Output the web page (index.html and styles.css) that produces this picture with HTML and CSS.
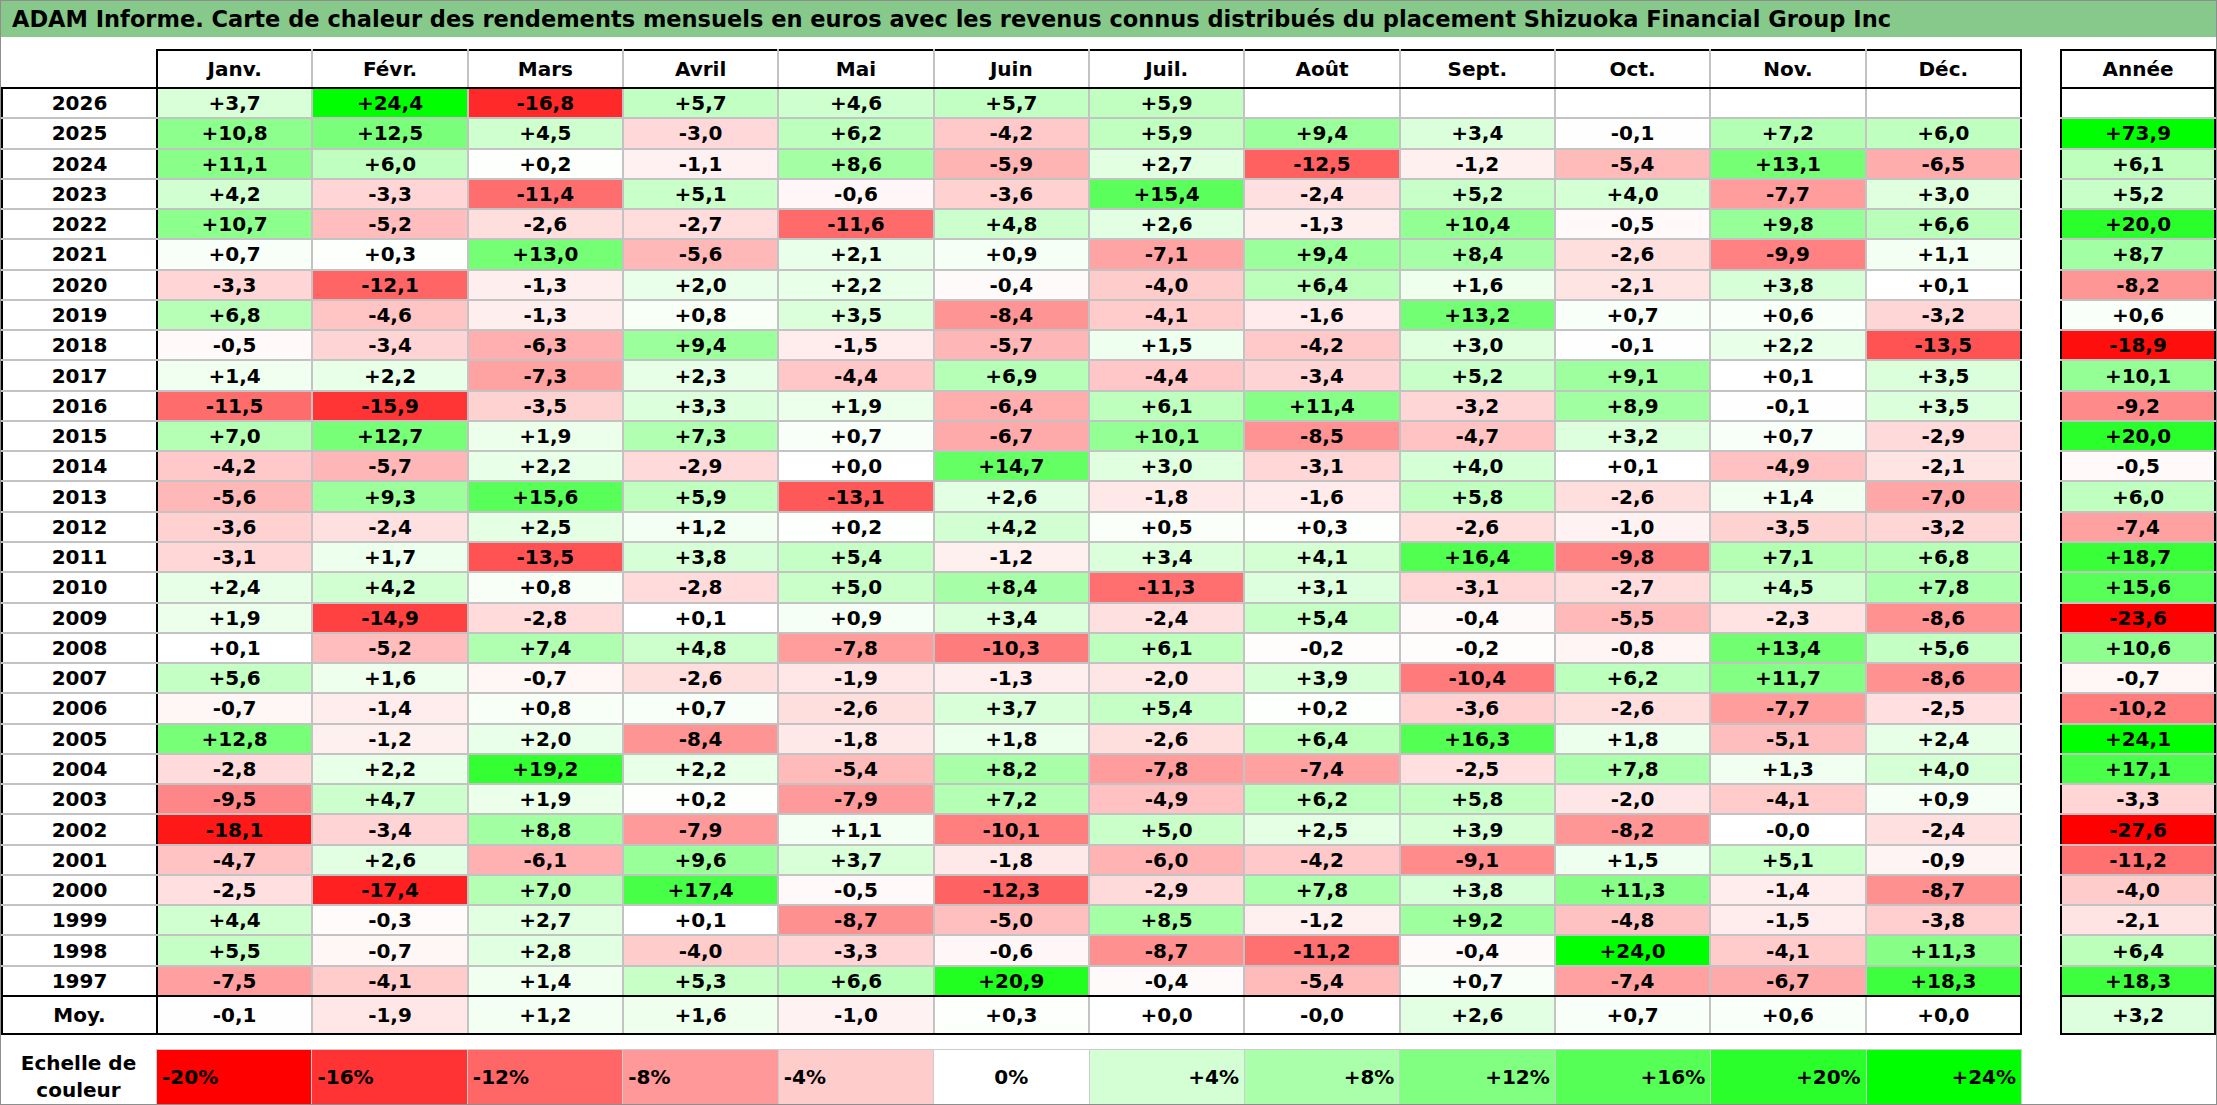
FILE: index.html
```html
<!DOCTYPE html>
<html lang="fr">
<head>
<meta charset="utf-8">
<title>ADAM Informe - Shizuoka Financial Group Inc</title>
<link rel="stylesheet" href="styles.css">
<script src="script.js" defer></script>
</head>
<body>
<div class="page">
  <div class="title">ADAM Informe. Carte de chaleur des rendements mensuels en euros avec les revenus connus distribués du placement Shizuoka Financial Group Inc</div>
  <div class="grid">
    <table class="hm main">
      <colgroup><col class="yc"><col span="12"></colgroup>
      <thead>
        <tr><th class="corner"></th><th>Janv.</th><th>Févr.</th><th>Mars</th><th>Avril</th><th>Mai</th><th>Juin</th><th>Juil.</th><th>Août</th><th>Sept.</th><th>Oct.</th><th>Nov.</th><th>Déc.</th></tr>
      </thead>
      <tbody>
        <tr><th>2026</th><td>+3,7</td><td>+24,4</td><td>-16,8</td><td>+5,7</td><td>+4,6</td><td>+5,7</td><td>+5,9</td><td></td><td></td><td></td><td></td><td></td></tr>
        <tr><th>2025</th><td>+10,8</td><td>+12,5</td><td>+4,5</td><td>-3,0</td><td>+6,2</td><td>-4,2</td><td>+5,9</td><td>+9,4</td><td>+3,4</td><td>-0,1</td><td>+7,2</td><td>+6,0</td></tr>
        <tr><th>2024</th><td>+11,1</td><td>+6,0</td><td>+0,2</td><td>-1,1</td><td>+8,6</td><td>-5,9</td><td>+2,7</td><td>-12,5</td><td>-1,2</td><td>-5,4</td><td>+13,1</td><td>-6,5</td></tr>
        <tr><th>2023</th><td>+4,2</td><td>-3,3</td><td>-11,4</td><td>+5,1</td><td>-0,6</td><td>-3,6</td><td>+15,4</td><td>-2,4</td><td>+5,2</td><td>+4,0</td><td>-7,7</td><td>+3,0</td></tr>
        <tr><th>2022</th><td>+10,7</td><td>-5,2</td><td>-2,6</td><td>-2,7</td><td>-11,6</td><td>+4,8</td><td>+2,6</td><td>-1,3</td><td>+10,4</td><td>-0,5</td><td>+9,8</td><td>+6,6</td></tr>
        <tr><th>2021</th><td>+0,7</td><td>+0,3</td><td>+13,0</td><td>-5,6</td><td>+2,1</td><td>+0,9</td><td>-7,1</td><td>+9,4</td><td>+8,4</td><td>-2,6</td><td>-9,9</td><td>+1,1</td></tr>
        <tr><th>2020</th><td>-3,3</td><td>-12,1</td><td>-1,3</td><td>+2,0</td><td>+2,2</td><td>-0,4</td><td>-4,0</td><td>+6,4</td><td>+1,6</td><td>-2,1</td><td>+3,8</td><td>+0,1</td></tr>
        <tr><th>2019</th><td>+6,8</td><td>-4,6</td><td>-1,3</td><td>+0,8</td><td>+3,5</td><td>-8,4</td><td>-4,1</td><td>-1,6</td><td>+13,2</td><td>+0,7</td><td>+0,6</td><td>-3,2</td></tr>
        <tr><th>2018</th><td>-0,5</td><td>-3,4</td><td>-6,3</td><td>+9,4</td><td>-1,5</td><td>-5,7</td><td>+1,5</td><td>-4,2</td><td>+3,0</td><td>-0,1</td><td>+2,2</td><td>-13,5</td></tr>
        <tr><th>2017</th><td>+1,4</td><td>+2,2</td><td>-7,3</td><td>+2,3</td><td>-4,4</td><td>+6,9</td><td>-4,4</td><td>-3,4</td><td>+5,2</td><td>+9,1</td><td>+0,1</td><td>+3,5</td></tr>
        <tr><th>2016</th><td>-11,5</td><td>-15,9</td><td>-3,5</td><td>+3,3</td><td>+1,9</td><td>-6,4</td><td>+6,1</td><td>+11,4</td><td>-3,2</td><td>+8,9</td><td>-0,1</td><td>+3,5</td></tr>
        <tr><th>2015</th><td>+7,0</td><td>+12,7</td><td>+1,9</td><td>+7,3</td><td>+0,7</td><td>-6,7</td><td>+10,1</td><td>-8,5</td><td>-4,7</td><td>+3,2</td><td>+0,7</td><td>-2,9</td></tr>
        <tr><th>2014</th><td>-4,2</td><td>-5,7</td><td>+2,2</td><td>-2,9</td><td>+0,0</td><td>+14,7</td><td>+3,0</td><td>-3,1</td><td>+4,0</td><td>+0,1</td><td>-4,9</td><td>-2,1</td></tr>
        <tr><th>2013</th><td>-5,6</td><td>+9,3</td><td>+15,6</td><td>+5,9</td><td>-13,1</td><td>+2,6</td><td>-1,8</td><td>-1,6</td><td>+5,8</td><td>-2,6</td><td>+1,4</td><td>-7,0</td></tr>
        <tr><th>2012</th><td>-3,6</td><td>-2,4</td><td>+2,5</td><td>+1,2</td><td>+0,2</td><td>+4,2</td><td>+0,5</td><td>+0,3</td><td>-2,6</td><td>-1,0</td><td>-3,5</td><td>-3,2</td></tr>
        <tr><th>2011</th><td>-3,1</td><td>+1,7</td><td>-13,5</td><td>+3,8</td><td>+5,4</td><td>-1,2</td><td>+3,4</td><td>+4,1</td><td>+16,4</td><td>-9,8</td><td>+7,1</td><td>+6,8</td></tr>
        <tr><th>2010</th><td>+2,4</td><td>+4,2</td><td>+0,8</td><td>-2,8</td><td>+5,0</td><td>+8,4</td><td>-11,3</td><td>+3,1</td><td>-3,1</td><td>-2,7</td><td>+4,5</td><td>+7,8</td></tr>
        <tr><th>2009</th><td>+1,9</td><td>-14,9</td><td>-2,8</td><td>+0,1</td><td>+0,9</td><td>+3,4</td><td>-2,4</td><td>+5,4</td><td>-0,4</td><td>-5,5</td><td>-2,3</td><td>-8,6</td></tr>
        <tr><th>2008</th><td>+0,1</td><td>-5,2</td><td>+7,4</td><td>+4,8</td><td>-7,8</td><td>-10,3</td><td>+6,1</td><td>-0,2</td><td>-0,2</td><td>-0,8</td><td>+13,4</td><td>+5,6</td></tr>
        <tr><th>2007</th><td>+5,6</td><td>+1,6</td><td>-0,7</td><td>-2,6</td><td>-1,9</td><td>-1,3</td><td>-2,0</td><td>+3,9</td><td>-10,4</td><td>+6,2</td><td>+11,7</td><td>-8,6</td></tr>
        <tr><th>2006</th><td>-0,7</td><td>-1,4</td><td>+0,8</td><td>+0,7</td><td>-2,6</td><td>+3,7</td><td>+5,4</td><td>+0,2</td><td>-3,6</td><td>-2,6</td><td>-7,7</td><td>-2,5</td></tr>
        <tr><th>2005</th><td>+12,8</td><td>-1,2</td><td>+2,0</td><td>-8,4</td><td>-1,8</td><td>+1,8</td><td>-2,6</td><td>+6,4</td><td>+16,3</td><td>+1,8</td><td>-5,1</td><td>+2,4</td></tr>
        <tr><th>2004</th><td>-2,8</td><td>+2,2</td><td>+19,2</td><td>+2,2</td><td>-5,4</td><td>+8,2</td><td>-7,8</td><td>-7,4</td><td>-2,5</td><td>+7,8</td><td>+1,3</td><td>+4,0</td></tr>
        <tr><th>2003</th><td>-9,5</td><td>+4,7</td><td>+1,9</td><td>+0,2</td><td>-7,9</td><td>+7,2</td><td>-4,9</td><td>+6,2</td><td>+5,8</td><td>-2,0</td><td>-4,1</td><td>+0,9</td></tr>
        <tr><th>2002</th><td>-18,1</td><td>-3,4</td><td>+8,8</td><td>-7,9</td><td>+1,1</td><td>-10,1</td><td>+5,0</td><td>+2,5</td><td>+3,9</td><td>-8,2</td><td>-0,0</td><td>-2,4</td></tr>
        <tr><th>2001</th><td>-4,7</td><td>+2,6</td><td>-6,1</td><td>+9,6</td><td>+3,7</td><td>-1,8</td><td>-6,0</td><td>-4,2</td><td>-9,1</td><td>+1,5</td><td>+5,1</td><td>-0,9</td></tr>
        <tr><th>2000</th><td>-2,5</td><td>-17,4</td><td>+7,0</td><td>+17,4</td><td>-0,5</td><td>-12,3</td><td>-2,9</td><td>+7,8</td><td>+3,8</td><td>+11,3</td><td>-1,4</td><td>-8,7</td></tr>
        <tr><th>1999</th><td>+4,4</td><td>-0,3</td><td>+2,7</td><td>+0,1</td><td>-8,7</td><td>-5,0</td><td>+8,5</td><td>-1,2</td><td>+9,2</td><td>-4,8</td><td>-1,5</td><td>-3,8</td></tr>
        <tr><th>1998</th><td>+5,5</td><td>-0,7</td><td>+2,8</td><td>-4,0</td><td>-3,3</td><td>-0,6</td><td>-8,7</td><td>-11,2</td><td>-0,4</td><td>+24,0</td><td>-4,1</td><td>+11,3</td></tr>
        <tr><th>1997</th><td>-7,5</td><td>-4,1</td><td>+1,4</td><td>+5,3</td><td>+6,6</td><td>+20,9</td><td>-0,4</td><td>-5,4</td><td>+0,7</td><td>-7,4</td><td>-6,7</td><td>+18,3</td></tr>
      </tbody>
      <tfoot>
        <tr><th>Moy.</th><td>-0,1</td><td>-1,9</td><td>+1,2</td><td>+1,6</td><td>-1,0</td><td>+0,3</td><td>+0,0</td><td>-0,0</td><td>+2,6</td><td>+0,7</td><td>+0,6</td><td>+0,0</td></tr>
      </tfoot>
    </table>
    <table class="hm annee">
      <thead><tr><th>Année</th></tr></thead>
      <tbody>
        <tr><td></td></tr>
        <tr><td>+73,9</td></tr>
        <tr><td>+6,1</td></tr>
        <tr><td>+5,2</td></tr>
        <tr><td>+20,0</td></tr>
        <tr><td>+8,7</td></tr>
        <tr><td>-8,2</td></tr>
        <tr><td>+0,6</td></tr>
        <tr><td>-18,9</td></tr>
        <tr><td>+10,1</td></tr>
        <tr><td>-9,2</td></tr>
        <tr><td>+20,0</td></tr>
        <tr><td>-0,5</td></tr>
        <tr><td>+6,0</td></tr>
        <tr><td>-7,4</td></tr>
        <tr><td>+18,7</td></tr>
        <tr><td>+15,6</td></tr>
        <tr><td>-23,6</td></tr>
        <tr><td>+10,6</td></tr>
        <tr><td>-0,7</td></tr>
        <tr><td>-10,2</td></tr>
        <tr><td>+24,1</td></tr>
        <tr><td>+17,1</td></tr>
        <tr><td>-3,3</td></tr>
        <tr><td>-27,6</td></tr>
        <tr><td>-11,2</td></tr>
        <tr><td>-4,0</td></tr>
        <tr><td>-2,1</td></tr>
        <tr><td>+6,4</td></tr>
        <tr><td>+18,3</td></tr>
      </tbody>
      <tfoot><tr><td>+3,2</td></tr></tfoot>
    </table>
  </div>
  <div class="scale">
    <div class="lbl">Echelle de<br>couleur</div>
    <div class="sw neg n20">-20%</div>
    <div class="sw neg n16">-16%</div>
    <div class="sw neg n12">-12%</div>
    <div class="sw neg n8">-8%</div>
    <div class="sw neg n4">-4%</div>
    <div class="sw zero">0%</div>
    <div class="sw pos p4">+4%</div>
    <div class="sw pos p8">+8%</div>
    <div class="sw pos p12">+12%</div>
    <div class="sw pos p16">+16%</div>
    <div class="sw pos p20">+20%</div>
    <div class="sw pos p24">+24%</div>
  </div>
</div>
</body>
</html>
```
FILE: styles.css
```css
* { box-sizing: border-box; }
html, body { margin: 0; padding: 0; background: #fff; }
body {
  font-family: "DejaVu Sans", "Liberation Sans", sans-serif;
  font-weight: bold;
  color: #000;
}
.page {
  width: 2217px;
  height: 1105px;
  border: 1px solid #8e8e8e;
  overflow: hidden;
}
.title {
  height: 36px;
  background: #86c98a;
  padding-left: 11px;
  font-size: 22.5px;
  line-height: 36px;
  white-space: nowrap;
  color: #000;
}
.grid {
  display: flex;
  align-items: flex-start;
  gap: 38px;
  margin-top: 12px;
}
table.hm {
  border-collapse: collapse;
  table-layout: fixed;
}
.main { width: 2021px; }
.main col.yc { width: 155px; }
.annee { width: 156px; }
.hm th, .hm td {
  padding: 0;
  text-align: center;
  font-size: 20px;
  font-weight: bold;
  white-space: nowrap;
  overflow: hidden;
  border: 2px solid #c3c3c3;
  background: #fff;
}
.hm thead tr { height: 38px; }
.hm tbody tr { height: 30.27px; }
.hm tfoot tr { height: 38px; }
.hm thead th {
  border-top-color: #000;
  border-bottom-color: #000;
}
.hm thead th.corner {
  border-top: none;
  border-left: none;
  border-right-color: #000;
}
.main tbody th, .main tfoot th {
  border-left-color: #000;
  border-right-color: #000;
}
.main tr > :last-child { border-right-color: #000; }
.hm tbody tr:last-child > * { border-bottom-color: #000; }
.hm tfoot tr > * {
  border-top-color: #000;
  border-bottom-color: #000;
}
.annee th, .annee td {
  border-left-color: #000;
  border-right-color: #000;
}
.scale {
  display: flex;
  margin-top: 14px;
  height: 56px;
  width: 2021px;
}
.scale .lbl {
  width: 155px;
  flex: none;
  display: flex;
  align-items: center;
  justify-content: center;
  text-align: center;
  font-size: 20px;
  line-height: 27px;
}
.scale .sw {
  flex: 1 1 0;
  display: flex;
  align-items: center;
  padding: 0 5px;
  font-size: 20px;
  border: 1px solid #cdcdcd;
  border-left-width: 0;
}
.scale .sw.n20 { border-left-width: 1px; }
.scale .neg { justify-content: flex-start; }
.scale .zero { justify-content: center; }
.scale .pos { justify-content: flex-end; }
.n20 { background: #ff0000; }
.n16 { background: #ff3333; }
.n12 { background: #ff6666; }
.n8 { background: #ff9999; }
.n4 { background: #ffcccc; }
.zero { background: #ffffff; }
.p4 { background: #d4ffd4; }
.p8 { background: #aaffaa; }
.p12 { background: #80ff80; }
.p16 { background: #55ff55; }
.p20 { background: #2bff2b; }
.p24 { background: #00ff00; }
```
FILE: script.js
```js
document.querySelectorAll('table.hm td').forEach(function (td) {
  var t = td.textContent.trim();
  if (!t) return;
  var v = parseFloat(t.replace(',', '.'));
  if (isNaN(v)) return;
  var c;
  if (v >= 0) {
    c = Math.round(255 - 255 * Math.min(v, 24) / 24);
    td.style.backgroundColor = 'rgb(' + c + ',255,' + c + ')';
  } else {
    c = Math.round(255 - 255 * Math.min(-v, 20) / 20);
    td.style.backgroundColor = 'rgb(255,' + c + ',' + c + ')';
  }
});
```
